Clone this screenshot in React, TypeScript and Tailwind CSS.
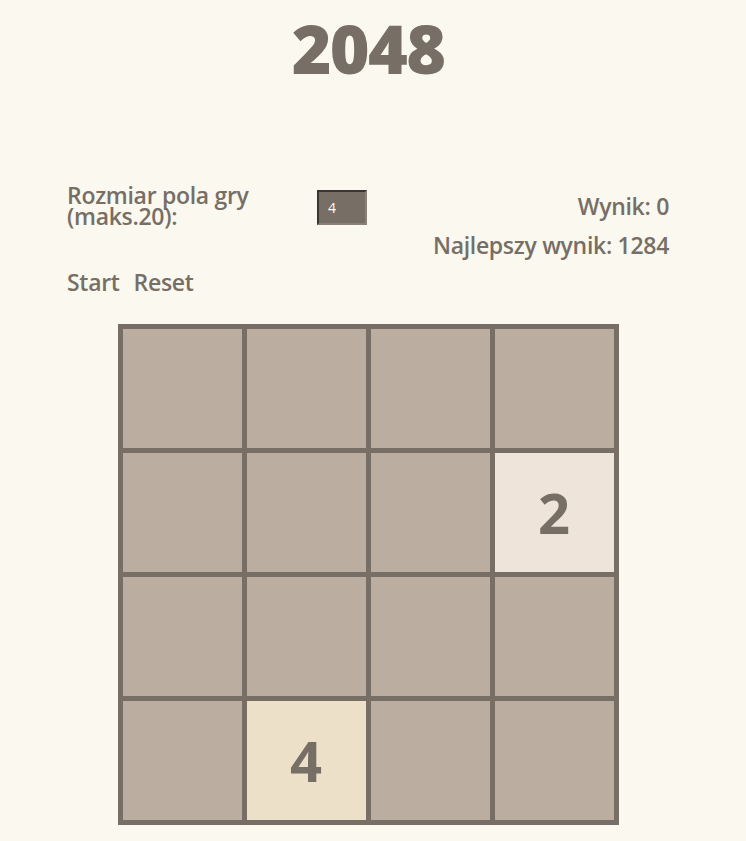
import { useState } from "react";

const tileColor: Record<number, string> = {
  0: "bg-[#bbada0]",
  2: "bg-[#eee4da]",
  4: "bg-[#ede0c8]",
};

const initial = [
  [0, 0, 0, 0],
  [0, 0, 0, 2],
  [0, 0, 0, 0],
  [0, 4, 0, 0],
];

export default function App() {
  const [size, setSize] = useState("4");
  const [board] = useState<number[][]>(initial);

  return (
    <main className="min-h-[841px] bg-[#faf8ef] font-['Open_Sans',sans-serif] text-[#776e65]">
      <div className="w-[736px]">
        <h1 className="pt-[12px] text-center text-[68px] font-extrabold leading-[72px] tracking-tight">2048</h1>

        <div className="mx-auto mt-[101px] w-[602px]">
          <div className="flex items-start justify-between">
            <div className="flex items-start">
              <label className="w-[250px] text-[23px] font-semibold leading-[21px] tracking-[-0.3px]">
                Rozmiar pola gry (maks.20):
              </label>
              <input
                value={size}
                onChange={(e) => setSize(e.target.value)}
                className="mt-[5px] h-[35px] w-[50px] border-2 border-t-[#3a3530] border-l-[#3a3530] border-b-[#8a817a] border-r-[#8a817a] bg-[#776e65] px-[9px] text-[14px] text-white outline-none"
              />
            </div>
            <div className="pt-[2px] text-right text-[23px] font-semibold leading-[39px] tracking-[-0.3px]">
              <div>Wynik: 0</div>
              <div>Najlepszy wynik: 1284</div>
            </div>
          </div>
          <div className="mt-[0px] flex gap-[14px] text-[23px] font-semibold tracking-[-0.3px]">
            <button>Start</button>
            <button>Reset</button>
          </div>
        </div>

        <div className="mx-auto mt-[24px] grid w-[501px] grid-cols-4 gap-[5px] border-[5px] border-[#776e65] bg-[#776e65]">
          {board.flat().map((v, i) => (
            <div
              key={i}
              className={`flex h-[119px] items-center justify-center text-[56px] font-bold ${tileColor[v] ?? "bg-[#bbada0]"}`}
            >
              {v ? v : ""}
            </div>
          ))}
        </div>
      </div>
    </main>
  );
}
